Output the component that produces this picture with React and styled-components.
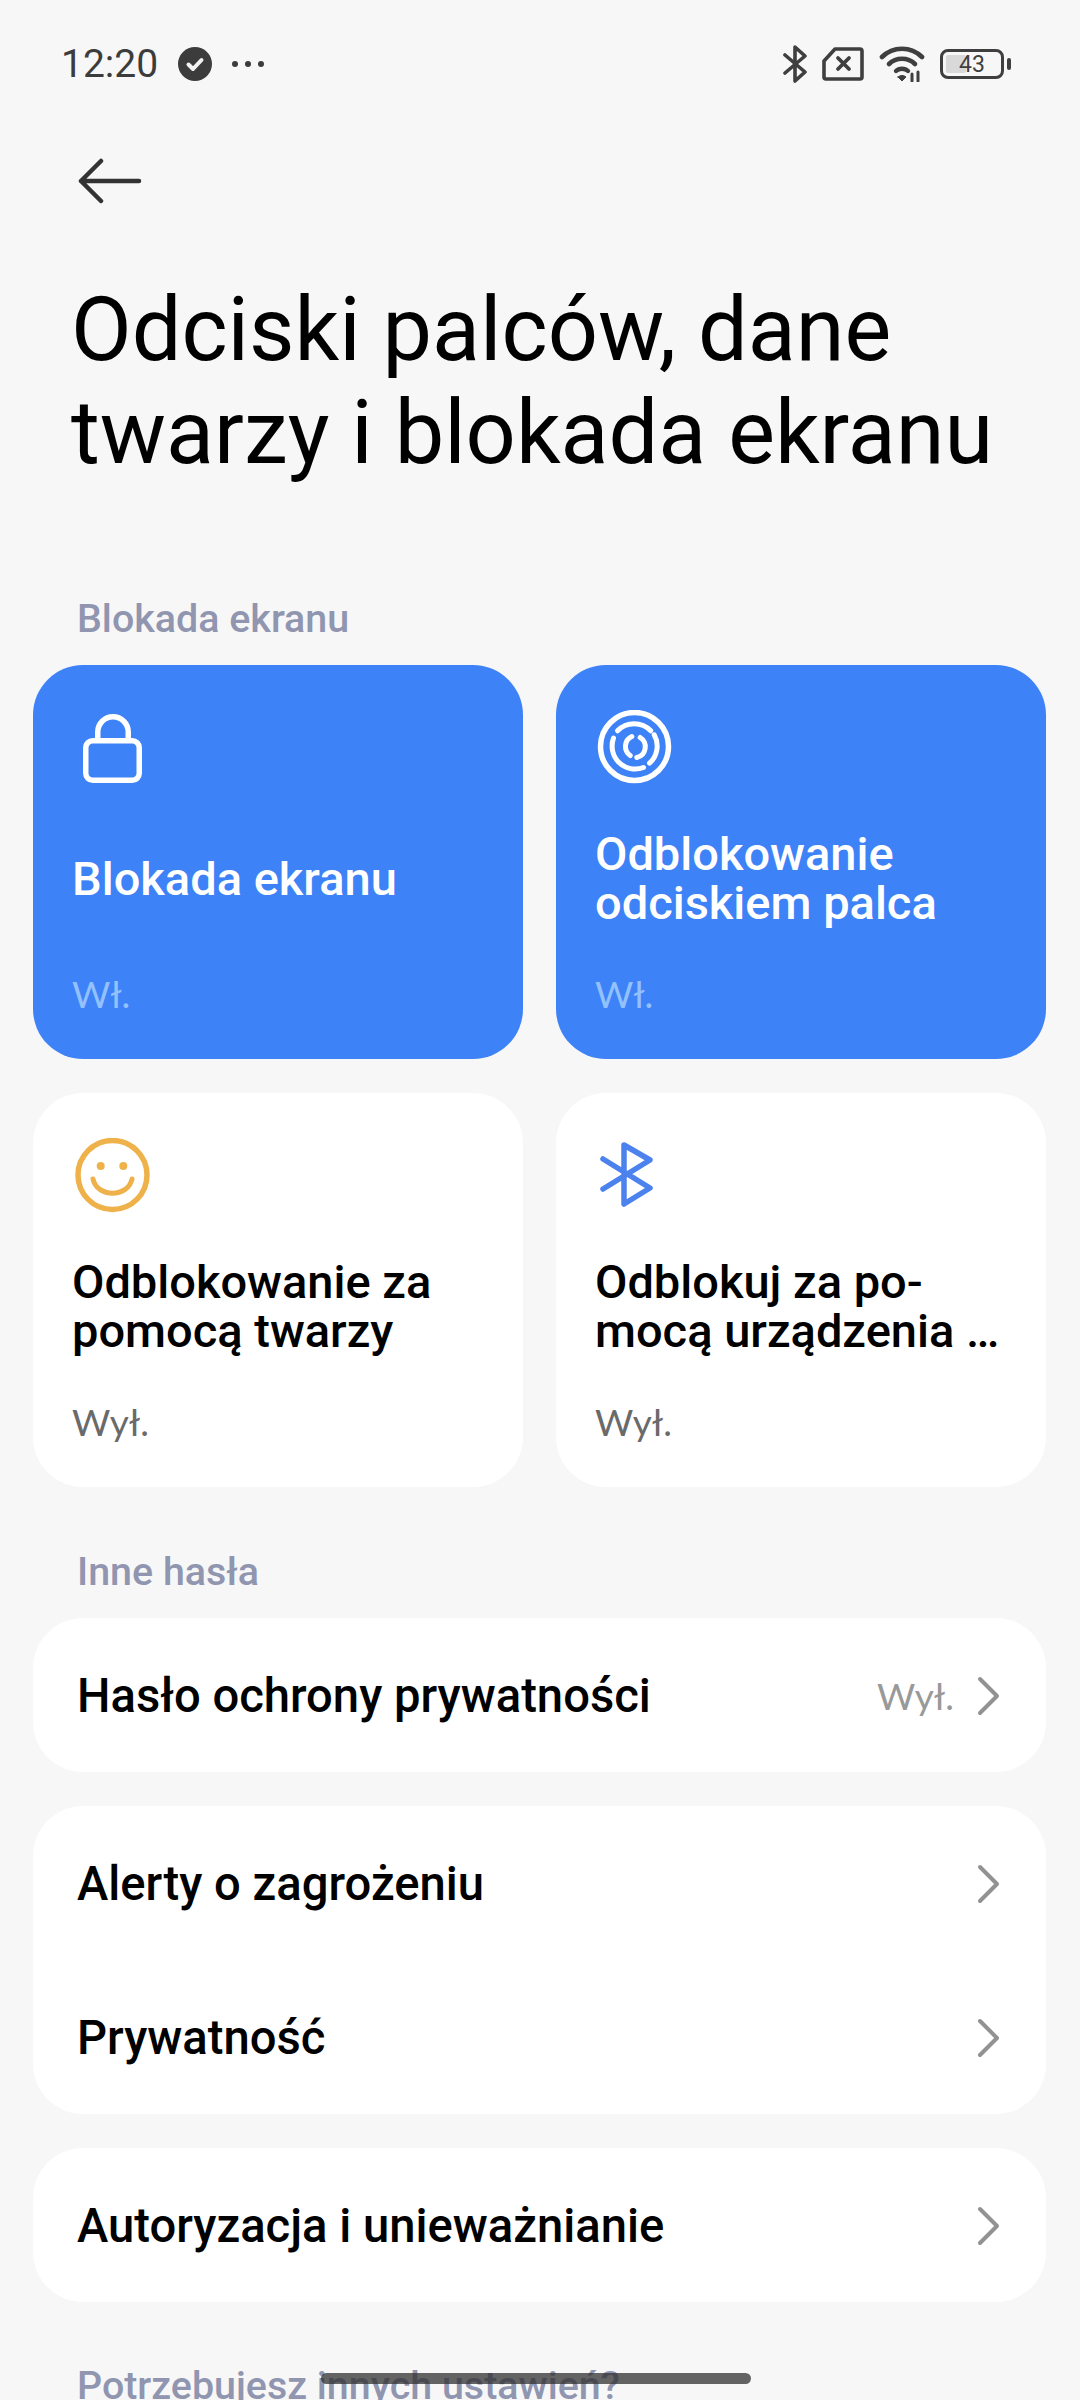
import React from 'react';
import styled, { createGlobalStyle } from 'styled-components';

const GlobalStyle = createGlobalStyle`
  html, body {
    margin: 0;
    padding: 0;
    background: #f7f7f7;
  }
  #root {
    width: 1080px;
    height: 2400px;
    overflow: hidden;
  }
`;

const Page = styled.div`
  position: relative;
  width: 1080px;
  height: 2400px;
  overflow: hidden;
  background: #f7f7f7;
  font-family: Roboto, "Noto Sans", sans-serif;
  color: #000;
`;

const StatusBar = styled.div`
  display: flex;
  align-items: center;
  justify-content: space-between;
  box-sizing: border-box;
  height: 126px;
  padding: 2px 69px 0 61px;
`;

const StatusGroup = styled.div`
  display: flex;
  align-items: center;
  gap: ${(p) => p.$gap || 16}px;
`;

const Time = styled.span`
  font-size: 39px;
  color: #3c3c3c;
  line-height: 44px;
`;

const Battery = styled.div`
  position: relative;
  display: flex;
  align-items: center;
  justify-content: center;
  box-sizing: border-box;
  width: 64px;
  height: 30px;
  border: 3px solid #3f3f3f;
  border-radius: 8px;
  font-size: 23px;
  color: #3f3f3f;
  margin-right: 7px;
  &::before {
    content: '';
    position: absolute;
    left: 3px;
    top: 3px;
    bottom: 3px;
    width: 20px;
    border-radius: 2px;
    background: #d9d9d9;
  }
  &::after {
    content: '';
    position: absolute;
    right: -10px;
    top: 6px;
    width: 4px;
    height: 12px;
    border-radius: 2px;
    background: #3f3f3f;
  }
`;

const BatteryLevel = styled.span`
  position: relative;
`;

const BackBar = styled.div`
  display: flex;
  align-items: center;
  height: 110px;
  padding-left: 78px;
`;

const Title = styled.h1`
  margin: 43px 0 0;
  padding-left: 71px;
  font-size: 88.2px;
  font-weight: 400;
  line-height: 103px;
  color: #000;
`;

const SectionLabel = styled.div`
  padding-left: 77px;
  margin-top: ${(p) => p.$top}px;
  margin-bottom: 24px;
  font-size: 39.4px;
  font-weight: 500;
  line-height: 44px;
  color: #9095b0;
`;

const CardGrid = styled.div`
  display: grid;
  grid-template-columns: 490px 490px;
  grid-auto-rows: 394px;
  gap: 34px 33px;
  padding-left: 33px;
`;

const Card = styled.div`
  display: flex;
  flex-direction: column;
  box-sizing: border-box;
  padding: 40px 39px 32px;
  border-radius: 50px;
  background: ${(p) => (p.$active ? '#3e82f7' : '#fff')};
`;

const IconSlot = styled.div`
  display: flex;
  align-items: center;
  height: 90px;
`;

const CardTitle = styled.div`
  display: flex;
  flex: 1;
  align-items: center;
  font-size: 47px;
  font-weight: 500;
  line-height: 49px;
  color: ${(p) => (p.$active ? '#fff' : '#000')};
`;

const CardState = styled.div`
  height: 66px;
  line-height: 65px;
  font-family: Lato, Roboto, sans-serif;
  font-size: 37px;
  font-weight: 400;
  color: ${(p) => (p.$active ? '#93c1fd' : '#6a6a6a')};
`;

const ListCard = styled.div`
  margin: 0 34px ${(p) => (p.$last ? 0 : 34)}px 33px;
  border-radius: 50px;
  background: #fff;
`;

const Row = styled.div`
  display: flex;
  align-items: center;
  box-sizing: border-box;
  height: 154px;
  padding: 1px 46px 0 44px;
`;

const RowLabel = styled.span`
  flex: 1;
  font-size: 47.2px;
  font-weight: 500;
  color: #000;
`;

const RowValue = styled.span`
  margin-right: 22px;
  font-family: Lato, Roboto, sans-serif;
  font-size: 37px;
  font-weight: 400;
  color: #999;
`;

const HomeBar = styled.div`
  position: absolute;
  left: 321px;
  top: 2373px;
  width: 430px;
  height: 11px;
  border-radius: 6px;
  background: rgba(50, 50, 50, 0.75);
`;

const Chevron = () => (
  <svg width="24" height="40" viewBox="0 0 24 40" fill="none" stroke="#929292" strokeWidth="4" strokeLinecap="round" strokeLinejoin="round">
    <path d="M4 3 L21 20 L4 37" />
  </svg>
);

const BackArrow = () => (
  <svg width="64" height="46" viewBox="0 0 64 46" fill="none" stroke="#333" strokeWidth="4.5" strokeLinecap="round" strokeLinejoin="round">
    <path d="M3 23 H61 M23 3 L3 23 L23 43" />
  </svg>
);

const CheckBadge = () => (
  <svg width="34" height="34" viewBox="0 0 34 34">
    <circle cx="17" cy="17" r="17" fill="#3c3c3c" />
    <path d="M10.5 17.5 L15 22 L23.5 13" fill="none" stroke="#f2f2f2" strokeWidth="4" strokeLinecap="round" strokeLinejoin="round" />
  </svg>
);

const MoreDots = () => (
  <svg width="32" height="8" viewBox="0 0 32 8" fill="#3c3c3c">
    <circle cx="3" cy="4" r="3" />
    <circle cx="16" cy="4" r="3" />
    <circle cx="29" cy="4" r="3" />
  </svg>
);

const StatusBluetooth = () => (
  <svg width="24" height="38" viewBox="0 0 24 38" fill="none" stroke="#3f3f3f" strokeWidth="3.6" strokeLinecap="round" strokeLinejoin="round">
    <path d="M2 10 L22 27 L12 36 V2 L22 11 L2 28" />
  </svg>
);

const SimOff = () => (
  <svg width="42" height="34" viewBox="0 0 42 34" fill="none" stroke="#3f3f3f" strokeWidth="3.6" strokeLinecap="round" strokeLinejoin="round">
    <path d="M2 14 L13 2 H38 Q40 2 40 4 V30 Q40 32 38 32 H4 Q2 32 2 30 Z" />
    <path d="M16 11 L27 22 M27 11 L16 22" strokeWidth="3.8" />
  </svg>
);

const Wifi = () => (
  <svg width="46" height="36" viewBox="0 0 46 36" fill="none" stroke="#3f3f3f" strokeLinecap="round">
    <path d="M3 11 C14 0 32 0 43 11" strokeWidth="4.6" />
    <path d="M10 18 C17 11 29 11 36 18" strokeWidth="4.6" />
    <path d="M17 25 C20 22 26 22 29 25" strokeWidth="4.4" />
    <path d="M19 31 L23 35 L27 31 C25 29 21 29 19 31 Z" fill="#3f3f3f" strokeWidth="1" />
    <path d="M33 28 V35 M39 26 V35" strokeWidth="3" />
  </svg>
);

const LockIcon = () => (
  <svg width="80" height="80" viewBox="0 0 80 80" fill="none" stroke="#fff" strokeWidth="5.5" strokeLinejoin="round">
    <rect x="13.75" y="30.75" width="53.5" height="39.5" rx="7" />
    <path d="M25.75 31 V22 A15.25 15.25 0 0 1 56.25 22 V31" />
  </svg>
);

const FingerprintIcon = () => (
  <svg width="80" height="80" viewBox="0 0 80 80" fill="none" stroke="#fff" strokeLinecap="round">
    <circle cx="39.5" cy="36.5" r="34" strokeWidth="5.5" />
    <path d="M22.5 20.8 A23 23 0 0 1 55.8 20.8" strokeWidth="5" />
    <path d="M59.2 24.8 A23 23 0 0 1 54.5 53.2" strokeWidth="5" />
    <path d="M48.5 57.5 A23 23 0 0 1 18.5 28.2" strokeWidth="5" />
    <path d="M36.8 26.5 A11 11 0 0 0 35.2 45.5" strokeWidth="5" />
    <path d="M45.2 27.5 A11 11 0 0 1 41.8 47.5" strokeWidth="5" />
  </svg>
);

const SmileIcon = () => (
  <svg width="80" height="80" viewBox="0 0 80 80" fill="none" stroke="#efb24a" strokeWidth="5.5" strokeLinecap="round">
    <circle cx="40.5" cy="37" r="34.5" />
    <circle cx="28.7" cy="28" r="4" fill="#efb24a" stroke="none" />
    <circle cx="51.3" cy="28" r="4" fill="#efb24a" stroke="none" />
    <path d="M21 41 C25 60 56 60 60 41" strokeWidth="5" />
  </svg>
);

const BluetoothIcon = () => (
  <svg width="80" height="80" viewBox="0 0 80 80" fill="none" stroke="#4c82ee" strokeWidth="5.5" strokeLinecap="round" strokeLinejoin="round">
    <path d="M8 21 L55 50 L29 66 V7 L55 22 L8 51" />
  </svg>
);

const cards = [
  { id: 'screen', title: 'Blokada ekranu', state: 'Wł.', active: true, icon: <LockIcon /> },
  { id: 'finger', title: <>Odblokowanie<br />odciskiem palca</>, state: 'Wł.', active: true, icon: <FingerprintIcon /> },
  { id: 'face', title: <>Odblokowanie za<br />pomocą twarzy</>, state: 'Wył.', icon: <SmileIcon /> },
  { id: 'device', title: <>Odblokuj za po-<br />mocą urządzenia …</>, state: 'Wył.', icon: <BluetoothIcon /> },
];

export default function App() {
  return (
    <Page>
      <GlobalStyle />
      <StatusBar>
        <StatusGroup $gap={20}>
          <Time>12:20</Time>
          <CheckBadge />
          <MoreDots />
        </StatusGroup>
        <StatusGroup $gap={15}>
          <StatusBluetooth />
          <SimOff />
          <Wifi />
          <Battery><BatteryLevel>43</BatteryLevel></Battery>
        </StatusGroup>
      </StatusBar>
      <BackBar><BackArrow /></BackBar>
      <Title>Odciski palców, dane<br />twarzy i blokada ekranu</Title>

      <SectionLabel $top={112}>Blokada ekranu</SectionLabel>
      <CardGrid>
        {cards.map((card) => (
          <Card key={card.id} $active={card.active}>
            <IconSlot>{card.icon}</IconSlot>
            <CardTitle $active={card.active}><span>{card.title}</span></CardTitle>
            <CardState $active={card.active}>{card.state}</CardState>
          </Card>
        ))}
      </CardGrid>

      <SectionLabel $top={63}>Inne hasła</SectionLabel>
      <ListCard>
        <Row>
          <RowLabel>Hasło ochrony prywatności</RowLabel>
          <RowValue>Wył.</RowValue>
          <Chevron />
        </Row>
      </ListCard>
      <ListCard>
        <Row><RowLabel>Alerty o zagrożeniu</RowLabel><Chevron /></Row>
        <Row><RowLabel>Prywatność</RowLabel><Chevron /></Row>
      </ListCard>
      <ListCard $last>
        <Row><RowLabel>Autoryzacja i unieważnianie</RowLabel><Chevron /></Row>
      </ListCard>

      <SectionLabel $top={62}>Potrzebujesz innych ustawień?</SectionLabel>
      <HomeBar />
    </Page>
  );
}
